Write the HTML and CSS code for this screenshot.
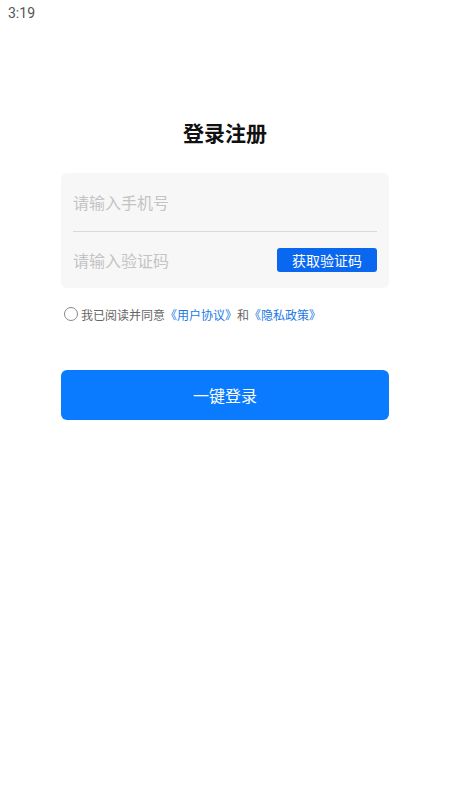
FILE: index.html
```html
<!DOCTYPE html>
<html lang="zh-CN">
<head>
    <meta charset="UTF-8">
    <meta name="viewport" content="width=device-width, initial-scale=1.0">
    <title>登录注册</title>
    <link rel="stylesheet" href="styles.css">
</head>
<body>

    <div class="status-bar">3:19</div>

    <div class="page">
        <h1 class="title">登录注册</h1>

        <form class="login-card" id="loginForm">
            <div class="field">
                <input type="tel" class="field-input" placeholder="请输入手机号">
            </div>
            <div class="field">
                <input type="text" class="field-input" placeholder="请输入验证码">
                <button type="button" class="code-btn">获取验证码</button>
            </div>
        </form>

        <div class="agree">
            <span class="radio"></span>
            <span class="agree-text">我已阅读并同意<a href="#" class="link">《用户协议》</a>和<a href="#" class="link">《隐私政策》</a></span>
        </div>

        <button type="button" class="login-btn">一键登录</button>
    </div>

</body>
</html>
```

FILE: styles.css
```css
/* Global */
* {
    box-sizing: border-box;
    margin: 0;
    padding: 0;
}
body {
    font-family: "Noto Sans CJK SC", "Noto Sans", sans-serif;
    background: #ffffff;
    color: #333;
}

/* Status bar */
.status-bar {
    height: 26px;
    line-height: 26px;
    padding-left: 8px;
    font-family: Roboto, "Noto Sans", sans-serif;
    font-size: 14px;
    color: #555;
}

.page {
    padding: 0 61px;
}

.title {
    margin-top: 92px;
    height: 28px;
    line-height: 28px;
    text-align: center;
    font-size: 21px;
    font-weight: bold;
    color: #111;
}

/* Card */
.login-card {
    margin-top: 27px;
    background: #f7f7f7;
    border-radius: 6px;
    padding: 0 12px;
}
.field {
    display: flex;
    align-items: center;
    height: 58px;
}
.field + .field {
    border-top: 1px solid #d9d9d9;
    height: 57px;
}
.field-input {
    flex: 1;
    min-width: 0;
    border: none;
    outline: none;
    background: transparent;
    font-family: inherit;
    font-size: 16px;
    color: #333;
}
.field-input::placeholder {
    color: #c4c4c4;
}
.code-btn {
    width: 100px;
    height: 24px;
    border: none;
    border-radius: 3px;
    background: #0a68f0;
    color: #fff;
    font-family: inherit;
    font-size: 14px;
    line-height: 24px;
}

/* Agreement */
.agree {
    display: flex;
    align-items: center;
    margin-top: 16px;
    height: 20px;
    padding-left: 3px;
    font-size: 12px;
    color: #666;
}
.radio {
    width: 14px;
    height: 14px;
    border: 1.5px solid #888;
    border-radius: 50%;
    margin-right: 3px;
}
.link {
    color: #1a78e6;
    text-decoration: none;
}

/* Login */
.login-btn {
    display: block;
    width: 100%;
    height: 50px;
    margin-top: 46px;
    border: none;
    border-radius: 6px;
    background: #0a7bff;
    color: #fff;
    font-family: inherit;
    font-size: 16px;
}
```
